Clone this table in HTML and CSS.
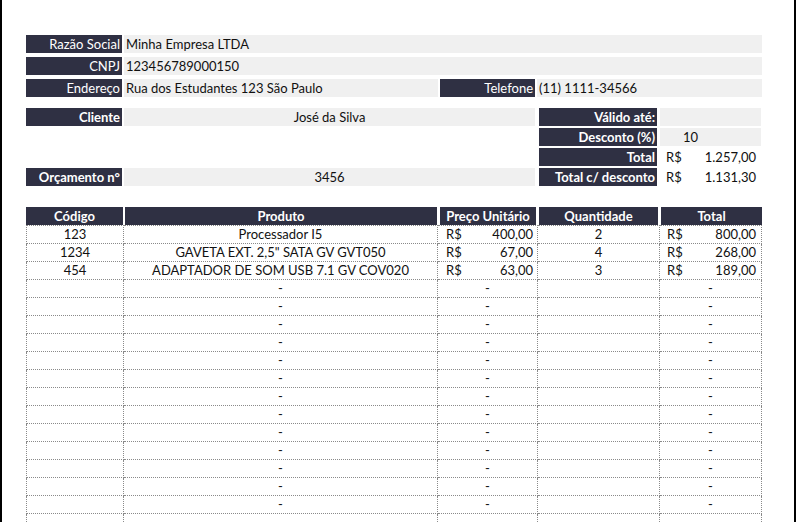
FILE: index.html
```html
<!DOCTYPE html>
<html lang="pt-BR">
<head>
<meta charset="utf-8">
<title>Orçamento</title>
<link rel="stylesheet" href="styles.css">
</head>
<body>
<div class="page">
  <section class="company">
    <div class="row">
      <div class="lbl w96">Razão Social</div>
      <div class="val grow">Minha Empresa LTDA</div>
    </div>
    <div class="row">
      <div class="lbl w96">CNPJ</div>
      <div class="val grow">123456789000150</div>
    </div>
    <div class="row">
      <div class="lbl w96">Endereço</div>
      <div class="val w314">Rua dos Estudantes 123 São Paulo</div>
      <div class="lbl w95">Telefone</div>
      <div class="val grow">(11) 1111-34566</div>
    </div>
  </section>

  <section class="summary">
    <div class="row">
      <div class="lbl b w96">Cliente</div>
      <div class="val w411 center">José da Silva</div>
      <div class="lbl b w118">Válido até:</div>
      <div class="val w101"></div>
    </div>
    <div class="row">
      <div class="blank w96"></div>
      <div class="blank w411"></div>
      <div class="lbl b w118">Desconto (%)</div>
      <div class="val w101 pct">10</div>
    </div>
    <div class="row">
      <div class="blank w96"></div>
      <div class="blank w411"></div>
      <div class="lbl b w118">Total</div>
      <div class="val white w101 money"><span>R$</span><span>1.257,00</span></div>
    </div>
    <div class="row">
      <div class="lbl b w96">Orçamento n°</div>
      <div class="val w411 center">3456</div>
      <div class="lbl b w118">Total c/ desconto</div>
      <div class="val white w101 money"><span>R$</span><span>1.131,30</span></div>
    </div>
  </section>

  <table class="items">
    <colgroup>
      <col class="c1"><col class="c2"><col class="c3"><col class="c4"><col class="c5">
    </colgroup>
    <thead>
      <tr><th>Código</th><th>Produto</th><th>Preço Unitário</th><th>Quantidade</th><th>Total</th></tr>
    </thead>
    <tbody>
      <tr><td>123</td><td>Processador I5</td><td class="m"><span>R$</span><span>400,00</span></td><td>2</td><td class="m t"><span>R$</span><span>800,00</span></td></tr>
      <tr><td>1234</td><td>GAVETA EXT. 2,5" SATA GV GVT050</td><td class="m"><span>R$</span><span>67,00</span></td><td>4</td><td class="m t"><span>R$</span><span>268,00</span></td></tr>
      <tr><td>454</td><td>ADAPTADOR DE SOM USB 7.1 GV COV020</td><td class="m"><span>R$</span><span>63,00</span></td><td>3</td><td class="m t"><span>R$</span><span>189,00</span></td></tr>
      <tr><td></td><td>-</td><td>-</td><td></td><td>-</td></tr>
      <tr><td></td><td>-</td><td>-</td><td></td><td>-</td></tr>
      <tr><td></td><td>-</td><td>-</td><td></td><td>-</td></tr>
      <tr><td></td><td>-</td><td>-</td><td></td><td>-</td></tr>
      <tr><td></td><td>-</td><td>-</td><td></td><td>-</td></tr>
      <tr><td></td><td>-</td><td>-</td><td></td><td>-</td></tr>
      <tr><td></td><td>-</td><td>-</td><td></td><td>-</td></tr>
      <tr><td></td><td>-</td><td>-</td><td></td><td>-</td></tr>
      <tr><td></td><td>-</td><td>-</td><td></td><td>-</td></tr>
      <tr><td></td><td>-</td><td>-</td><td></td><td>-</td></tr>
      <tr><td></td><td>-</td><td>-</td><td></td><td>-</td></tr>
      <tr><td></td><td>-</td><td>-</td><td></td><td>-</td></tr>
      <tr><td></td><td>-</td><td>-</td><td></td><td>-</td></tr>
      <tr><td></td><td></td><td></td><td></td><td></td></tr>
    </tbody>
  </table>
</div>
</body>
</html>
```

FILE: styles.css
```css
html, body {
  margin: 0;
  padding: 0;
  background: #fff;
}
body {
  font-family: Lato, "Liberation Sans", sans-serif;
  font-size: 13px;
  color: #111;
}
.page {
  box-sizing: border-box;
  width: 796px;
  height: 522px;
  overflow: hidden;
  border-left: 2px solid #000;
  border-right: 2px solid #000;
  padding: 35px 0 0 24px;
}
.row {
  display: flex;
  height: 18px;
  line-height: 18px;
  white-space: nowrap;
}
.company .row {
  gap: 2px;
  margin-bottom: 4px;
  width: 736px;
}
.company {
  margin-bottom: 11px;
}
.lbl {
  background: #2f3043;
  color: #fff;
  text-align: right;
  padding-right: 2px;
  box-sizing: border-box;
}
.lbl.b {
  font-weight: bold;
}
.val {
  background: #f0f0f0;
  padding-left: 2px;
  box-sizing: border-box;
}
.val.white {
  background: #fff;
}
.grow { flex: 1; }
.w96 { width: 96px; flex: none; }
.w95 { width: 95px; flex: none; }
.w314 { width: 314px; flex: none; }
.w411 { width: 411px; flex: none; }
.w118 { width: 118px; flex: none; }
.w101 { width: 101px; flex: none; }

.summary .row {
  margin-bottom: 2px;
}
.summary .w96 { margin-right: 2px; }
.summary .w411 { margin-right: 4px; }
.summary .w118 { margin-right: 3px; }
.center { text-align: center; padding-left: 0; }
.pct { padding-left: 23px; }
.money {
  display: flex;
  justify-content: space-between;
  padding: 0 5px 0 6px;
}

.items {
  margin-top: 21px;
  width: 736px;
  table-layout: fixed;
  border-collapse: separate;
  border-spacing: 0;
  font-size: 13px;
}
.items col.c1 { width: 98px; }
.items col.c2 { width: 314px; }
.items col.c3 { width: 100px; }
.items col.c4 { width: 122px; }
.items col.c5 { width: 102px; }
.items th {
  height: 18px;
  padding: 0;
  background: #2f3043;
  background-clip: padding-box;
  color: #fff;
  font-weight: bold;
  text-align: center;
  line-height: 18px;
  border: 0 solid transparent;
  box-sizing: border-box;
}
.items th:nth-child(1) { border-right-width: 1px; }
.items th:nth-child(2) { border-left-width: 1px; border-right-width: 1px; }
.items th:nth-child(3) { border-left-width: 2px; border-right-width: 2px; }
.items th:nth-child(4) { border-left-width: 1px; border-right-width: 2px; }
.items th:nth-child(5) { border-left-width: 1px; }
.items td {
  height: 18px;
  box-sizing: border-box;
  padding: 0;
  line-height: 17px;
  text-align: center;
  white-space: nowrap;
  border-right: 1px dotted #8a8a8a;
  border-bottom: 1px dotted #8a8a8a;
}
.items td:first-child {
  border-left: 1px dotted #8a8a8a;
}
.items tbody tr:first-child td {
  border-top: 1px dotted #8a8a8a;
  height: 19px;
}
.items td.m {
  text-align: left;
}
.items td.m span:first-child {
  float: left;
  padding-left: 8px;
}
.items td.m span:last-child {
  float: right;
  padding-right: 4px;
}
.items td.m.t span:first-child { padding-left: 7px; }
.items td.m.t span:last-child { padding-right: 5px; }
```
